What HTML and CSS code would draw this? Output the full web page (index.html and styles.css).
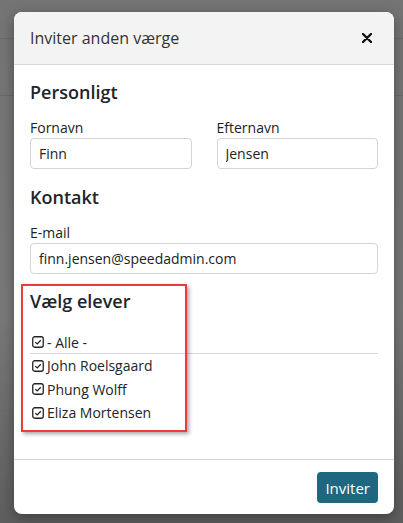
FILE: index.html
```html
<!DOCTYPE html>
<html lang="da">
<head>
  <meta charset="UTF-8">
  <meta name="viewport" content="width=device-width, initial-scale=1.0">
  <title>Inviter anden værge</title>
  <link rel="stylesheet" href="styles.css">
</head>
<body>
  <div class="page-bg">
    <div class="bg-line bg-line1"></div>
    <div class="bg-line bg-line2"></div>
    <div class="bg-line bg-line3"></div>
  </div>

  <div class="modal">
    <div class="modal-header">
      <span class="modal-title">Inviter anden værge</span>
      <svg class="modal-close" viewBox="0 0 10 10"><path d="M1 1 L9 9 M9 1 L1 9" stroke="#111" stroke-width="2.4" stroke-linecap="round"/></svg>
    </div>

    <div class="modal-body">
      <h3 class="section-title">Personligt</h3>
      <div class="row">
        <div class="field">
          <label>Fornavn</label>
          <input class="input" type="text" value="Finn">
        </div>
        <div class="field">
          <label>Efternavn</label>
          <input class="input" type="text" value="Jensen">
        </div>
      </div>

      <h3 class="section-title">Kontakt</h3>
      <div class="field">
        <label>E-mail</label>
        <input class="input" type="text" value="finn.jensen@speedadmin.com">
      </div>

      <div class="students">
        <h3 class="section-title">Vælg elever</h3>
        <ul class="student-list">
          <li class="all">
            <svg class="check" viewBox="0 0 12 12"><rect x="0.75" y="0.75" width="10.5" height="10.5" rx="2" fill="none" stroke="#222" stroke-width="1.3"/><path d="M3.3 6.1 L5.2 7.9 L8.8 4.3" fill="none" stroke="#222" stroke-width="1.3"/></svg>
            - Alle -
          </li>
          <li>
            <svg class="check" viewBox="0 0 12 12"><rect x="0.75" y="0.75" width="10.5" height="10.5" rx="2" fill="none" stroke="#222" stroke-width="1.3"/><path d="M3.3 6.1 L5.2 7.9 L8.8 4.3" fill="none" stroke="#222" stroke-width="1.3"/></svg>
            John Roelsgaard
          </li>
          <li>
            <svg class="check" viewBox="0 0 12 12"><rect x="0.75" y="0.75" width="10.5" height="10.5" rx="2" fill="none" stroke="#222" stroke-width="1.3"/><path d="M3.3 6.1 L5.2 7.9 L8.8 4.3" fill="none" stroke="#222" stroke-width="1.3"/></svg>
            Phung Wolff
          </li>
          <li>
            <svg class="check" viewBox="0 0 12 12"><rect x="0.75" y="0.75" width="10.5" height="10.5" rx="2" fill="none" stroke="#222" stroke-width="1.3"/><path d="M3.3 6.1 L5.2 7.9 L8.8 4.3" fill="none" stroke="#222" stroke-width="1.3"/></svg>
            Eliza Mortensen
          </li>
        </ul>
        <div class="highlight"></div>
      </div>
    </div>

    <div class="modal-footer">
      <button class="btn-primary">Inviter</button>
    </div>
  </div>
</body>
</html>
```

FILE: styles.css
```css
* {
  box-sizing: border-box;
}
body {
  margin: 0;
  width: 403px;
  height: 523px;
  overflow: hidden;
  font-family: "Open Sans", Arial, sans-serif;
  color: #212529;
  background-color: #7a7a7a;
  position: relative;
}

/* dimmed page behind the dialog */
.page-bg {
  position: absolute;
  inset: 0;
  background: linear-gradient(to bottom, #747474 0%, #797979 60%, #5e5e5e 100%);
}
.bg-line {
  position: absolute;
  left: 0;
  right: 0;
  height: 1px;
  background-color: #6a6a6a;
}
.bg-line1 { top: 38px; }
.bg-line2 { top: 95px; }
.bg-line3 { top: 410px; }

.modal {
  position: absolute;
  left: 14px;
  top: 12px;
  width: 380px;
  height: 502px;
  background-color: #fff;
  border-radius: 8px;
  display: flex;
  flex-direction: column;
  box-shadow: 0 4px 14px rgba(0, 0, 0, 0.35);
  overflow: hidden;
}
.modal-header {
  display: flex;
  align-items: center;
  justify-content: space-between;
  height: 53px;
  padding: 0 22px 0 16px;
  background-color: #f3f3f3;
  border-bottom: 1px solid #d6d6d6;
}
.modal-title {
  font-size: 16px;
  color: #333;
}
.modal-close {
  width: 10px;
  height: 10px;
}

.modal-body {
  flex: 1;
  padding: 14px 16px 0 16px;
}
.section-title {
  margin: 0 0 14px 0;
  font-size: 18px;
  font-weight: 600;
  line-height: 26px;
}
.row {
  display: flex;
  gap: 25px;
  margin-bottom: 3px;
}
.row .field {
  flex: 1;
}
.field {
  margin-bottom: 12px;
}
.field label {
  display: block;
  font-size: 14px;
  line-height: 18px;
  margin-bottom: 1px;
  color: #222;
}
.input {
  width: 100%;
  height: 31px;
  padding: 0 8px;
  font-family: "Open Sans", Arial, sans-serif;
  font-size: 14px;
  color: #222;
  border: 1px solid #d4d4d4;
  border-radius: 4px;
  outline: none;
}

.students {
  position: relative;
  padding-top: 2px;
}
.students .section-title {
  margin-bottom: 17px;
}
.student-list {
  list-style: none;
  margin: 0;
  padding: 0;
}
.student-list li {
  display: flex;
  align-items: center;
  gap: 3px;
  font-size: 14px;
  height: 23.5px;
  padding-left: 2px;
}
.student-list li.all {
  border-bottom: 1px solid #d6d6e0;
  height: 23px;
  margin-bottom: 0;
}
.check {
  width: 12px;
  height: 12px;
  flex-shrink: 0;
}

/* red marker drawn round the student picker */
.highlight {
  position: absolute;
  left: -9px;
  top: -2px;
  width: 166px;
  height: 148px;
  border: 2px solid #ee3a3a;
  box-shadow: 2px 2px 4px rgba(0, 0, 0, 0.35);
  pointer-events: none;
}

.modal-footer {
  height: 55px;
  border-top: 1px solid #d6d6d6;
  display: flex;
  align-items: flex-start;
  justify-content: flex-end;
  padding: 12px 16px 0 0;
}
.btn-primary {
  height: 31px;
  padding: 0 8px;
  font-family: "Open Sans", Arial, sans-serif;
  font-size: 15px;
  color: #fff;
  background-color: #1f6680;
  border: none;
  border-radius: 4px;
}
```
